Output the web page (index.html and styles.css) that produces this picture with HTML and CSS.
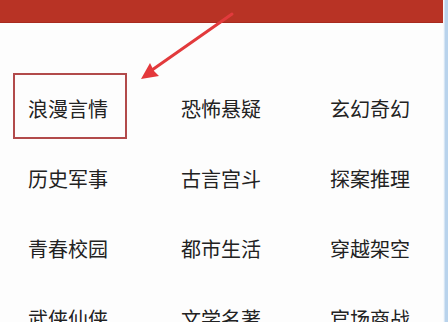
FILE: index.html
```html
<!DOCTYPE html>
<html>
<head>
<meta charset="utf-8">
<link rel="stylesheet" href="styles.css">
</head>
<body>
<div class="page">
  <div class="main">
    <div class="topbar"></div>
    <div class="grid">
      <div class="cell"><span class="label boxed">浪漫言情</span></div>
      <div class="cell"><span class="label">恐怖悬疑</span></div>
      <div class="cell"><span class="label">玄幻奇幻</span></div>
      <div class="cell"><span class="label">历史军事</span></div>
      <div class="cell"><span class="label">古言宫斗</span></div>
      <div class="cell"><span class="label">探案推理</span></div>
      <div class="cell"><span class="label">青春校园</span></div>
      <div class="cell"><span class="label">都市生活</span></div>
      <div class="cell"><span class="label">穿越架空</span></div>
      <div class="cell"><span class="label">武侠仙侠</span></div>
      <div class="cell"><span class="label">文学名著</span></div>
      <div class="cell"><span class="label">官场商战</span></div>
    </div>
  </div>
  <div class="edge"></div>
  <svg class="arrow" width="448" height="322" viewBox="0 0 448 322">
    <line x1="232" y1="14" x2="152" y2="70" stroke="#e23a3c" stroke-width="3" stroke-linecap="round"/>
    <polygon points="141,79 159,76 154,71 150,63" fill="#e4383b"/>
  </svg>
</div>
</body>
</html>
```
FILE: styles.css
```css
html, body {
  margin: 0;
  padding: 0;
  background: #fdfdfd;
}
.page {
  position: relative;
  width: 448px;
  height: 322px;
  overflow: hidden;
  display: flex;
}
.main {
  width: 443px;
  flex-shrink: 0;
  display: flex;
  flex-direction: column;
}
.topbar {
  flex-shrink: 0;
  height: 23px;
  background: #b83325;
  border-bottom: 1px solid #a82a1f;
  box-sizing: border-box;
}
.grid {
  flex-shrink: 0;
  margin-top: 50px;
  display: grid;
  grid-template-columns: 151px 150px 142px;
  grid-auto-rows: 70px;
}
.cell {
  display: flex;
  align-items: flex-start;
  padding-left: 13px;
}
.cell:nth-child(3n+2) { padding-left: 15px; }
.cell:nth-child(3n) { padding-left: 14px; }
.label {
  box-sizing: border-box;
  height: 66px;
  display: flex;
  align-items: center;
  padding: 5px 17px 0 13px;
  border: 2px solid transparent;
  font-family: "Noto Sans CJK SC", "Noto Sans", sans-serif;
  font-size: 20px;
  color: #222;
  line-height: 1;
}
.boxed {
  border-color: #b24a4b;
}
.edge {
  flex-shrink: 0;
  width: 5px;
  background: linear-gradient(to right, #f4f8fc 0, #f4f8fc 1px, #b9d3ec 2px, #b9d3ec 5px);
}
.arrow {
  position: absolute;
  left: 0;
  top: 0;
}
```
